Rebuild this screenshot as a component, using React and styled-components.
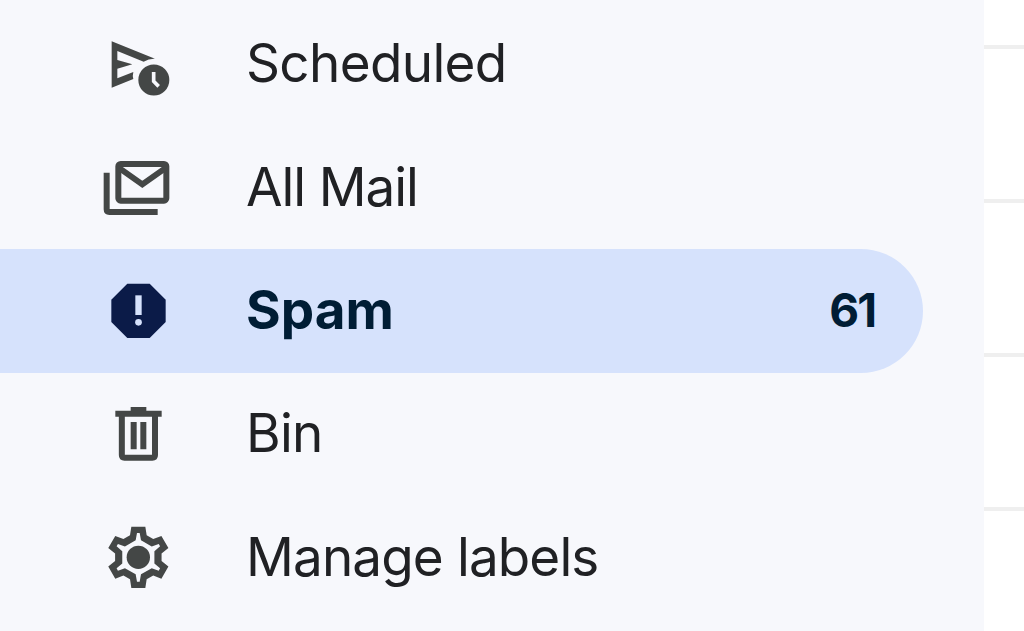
import { styled, createGlobalStyle } from "styled-components";

const GlobalStyle = createGlobalStyle`
  * {
    box-sizing: border-box;
  }
  body {
    margin: 0;
    background-color: #fff;
    font-family: Inter, Roboto, sans-serif;
  }
`;

const Page = styled.div`
  display: flex;
  height: 631px;
  overflow: hidden;
`;

const Sidebar = styled.nav`
  width: 984px;
  flex-shrink: 0;
  padding-top: 2.8px;
  background-color: #f7f8fc;
`;

const Item = styled.a`
  display: flex;
  align-items: center;
  width: 923px;
  height: 123.3px;
  padding: 0 48px 0 95px;
  border-radius: 0 62px 62px 0;
  cursor: pointer;
  color: ${props => props.$active ? "#001d35" : "#202124"};
  background-color: ${props => props.$active ? "#d6e2fc" : "transparent"};
  font-weight: ${props => props.$active ? 700 : 400};
`;

const Icon = styled.svg`
  width: 90px;
  height: 80px;
  flex-shrink: 0;
  color: ${props => props.$active ? "#0b1b48" : "#444746"};
`;

const Label = styled.span`
  flex: 1;
  margin-left: 61px;
  padding-bottom: 2px;
  font-size: 53px;
  line-height: 64px;
  letter-spacing: ${props => props.$spacing || 0}px;
  white-space: nowrap;
`;

const Count = styled.span`
  padding-bottom: 2px;
  font-size: 46px;
  line-height: 64px;
  letter-spacing: -2px;
`;

const MailList = styled.main`
  flex: 1;
  background-color: #fff;
`;

const MailRow = styled.div`
  height: ${props => props.$first ? 49 : 154}px;
  border-bottom: 4px solid #efefef;
`;

// Repeats one tooth of the gear around its centre
const gearPath = (points) => {
  const result = [];
  for (let i = 0; i < 6; i++) {
    const a = (i * Math.PI) / 3;
    points.forEach(([x, y]) => {
      const px = 130 + x * Math.cos(a) - y * Math.sin(a);
      const py = 126 + x * Math.sin(a) + y * Math.cos(a);
      result.push(`${px.toFixed(1)} ${py.toFixed(1)}`);
    });
  }
  return `M${result.join("L")}Z`;
};

const gearOuter = gearPath([[-25, -66], [-21, -92], [21, -92], [25, -66]]);
const gearInner = gearPath([[-8, -51], [-4, -73], [4, -73], [8, -51]]);

function ScheduledIcon() {
  return (
    <Icon viewBox="0 -18 270 240">
      <path fill="currentColor" d="M50 34L180 86Q162 85 146 95L67 63V90L112 103L67 116V145L115 126Q112 137 115 147L50 173Z" />
      <circle cx="176.5" cy="150" r="46.5" fill="currentColor" />
      <path d="M176 126V154L191 169" fill="none" stroke="#f7f8fc" strokeWidth="11" />
    </Icon>
  );
}

function AllMailIcon() {
  return (
    <Icon viewBox="0 -7 270 240" fill="none" stroke="currentColor" strokeWidth="18">
      <rect x="70" y="41" width="144" height="110" rx="7" />
      <path d="M74 54L142 102L210 54" />
      <path d="M35 67V177Q35 185 43 185H188" />
    </Icon>
  );
}

function SpamIcon() {
  return (
    <Icon $active viewBox="0 3 270 240">
      <path fill="currentColor" d="M97 41H164L212 89V156L164 204H97L49 156V89Z" />
      <path fill="#d6e2fc" d="M121 76H140V135H121Z" />
      <circle cx="130.5" cy="157" r="10" fill="#d6e2fc" />
    </Icon>
  );
}

function BinIcon() {
  return (
    <Icon viewBox="0 -3 270 240" fill="currentColor">
      <path d="M107 36H154V47H200V65H61V47H107Z" />
      <path d="M80.5 60V180Q80.5 188 88.5 188H172Q180 188 180 180V60" fill="none" stroke="currentColor" strokeWidth="18" />
      <path d="M107 81H125V163H107ZM136 81H154V163H136Z" />
    </Icon>
  );
}

function GearIcon() {
  return (
    <Icon viewBox="0 8 270 240">
      <path fill="currentColor" fillRule="evenodd" d={gearOuter + gearInner} />
      <circle cx="130" cy="126" r="35" fill="currentColor" />
    </Icon>
  );
}

const items = [
  { label: "Scheduled", icon: ScheduledIcon, spacing: -0.65 },
  { label: "All Mail", icon: AllMailIcon, spacing: -1.1 },
  { label: "Spam", icon: SpamIcon, spacing: 0, count: 61, active: true },
  { label: "Bin", icon: BinIcon, spacing: -0.8 },
  { label: "Manage labels", icon: GearIcon, spacing: -0.87 },
];

export default function App() {
  return (
    <>
      <GlobalStyle />
      <Page>
        <Sidebar>
          {items.map(({ label, icon: ItemIcon, spacing, count, active }) => (
            <Item key={label} $active={active}>
              <ItemIcon />
              <Label $spacing={spacing}>{label}</Label>
              {count && <Count>{count}</Count>}
            </Item>
          ))}
        </Sidebar>
        <MailList>
          <MailRow $first />
          <MailRow />
          <MailRow />
          <MailRow />
        </MailList>
      </Page>
    </>
  );
}
